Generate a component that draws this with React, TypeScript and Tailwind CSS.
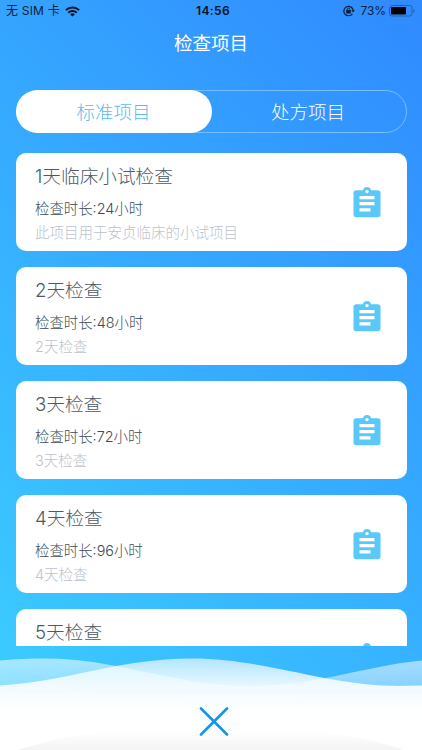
type Item = { title: string; hours?: number; note?: string };

const items: Item[] = [
  { title: "1天临床小试检查", hours: 24, note: "此项目用于安贞临床的小试项目" },
  { title: "2天检查", hours: 48, note: "2天检查" },
  { title: "3天检查", hours: 72, note: "3天检查" },
  { title: "4天检查", hours: 96, note: "4天检查" },
  { title: "5天检查" },
];

function StatusBar() {
  return (
    <div className="grid h-[22px] grid-cols-3 items-center pr-[6px] pl-[6px] text-[12px] leading-[22px] text-[#0b1f38]">
      <div className="flex items-center gap-[5px]">
        <span className="text-[12px] tracking-[0.2px] whitespace-nowrap">无 SIM 卡</span>
        <svg width="15" height="11" viewBox="0 0 15 11" fill="none" stroke="#061323" strokeWidth="2">
          <path d="M.9 4.1a9.4 9.4 0 0 1 13.2 0" />
          <path d="M3.3 6.7a6 6 0 0 1 8.4 0" />
          <path d="M7.5 10.6 5.2 8.4a3.3 3.3 0 0 1 4.6 0z" fill="#061323" stroke="none" />
        </svg>
      </div>
      <div className="pl-[4px] text-center text-[12px] font-semibold tracking-[0.4px] text-[#061323]">14:56</div>
      <div className="flex items-center justify-end">
        <svg className="mr-[6px]" width="12" height="12" viewBox="0 0 12 12" fill="none" stroke="#0b1f38" strokeWidth="1.2">
          <path d="M9.4 8.8A4.7 4.7 0 1 1 10.2 5.2" />
          <path d="M8.2 5.2h3.8l-1.9 2.4z" fill="#0b1f38" stroke="none" />
          <path d="M4.2 5.3V4.4a1.3 1.3 0 0 1 2.6 0v.9" strokeWidth=".9" />
          <rect x="3.2" y="4.9" width="4.6" height="3.5" rx=".4" fill="#0b1f38" stroke="none" />
        </svg>
        <span className="mr-[3px] tracking-[-0.1px]">73%</span>
        <svg width="27" height="12" viewBox="0 0 27 12">
          <rect x=".5" y=".5" width="22.5" height="10.5" rx="2.4" fill="none" stroke="#2360a8" />
          <rect x="2" y="2" width="15" height="7.5" rx=".8" fill="#000" />
          <path d="M24.3 4v4c1.7-.6 1.7-3.4 0-4z" fill="#2360a8" />
        </svg>
      </div>
    </div>
  );
}

function ClipboardIcon() {
  return (
    <svg width="28" height="32" viewBox="0 0 28 32" className="shrink-0">
      <path
        d="M3.3 3.3h6.7a4.1 4.1 0 0 1 8 0h6.7a2.8 2.8 0 0 1 2.8 2.8v21.4a2.8 2.8 0 0 1-2.8 2.8H3.3a2.8 2.8 0 0 1-2.8-2.8V6.1a2.8 2.8 0 0 1 2.8-2.8z"
        fill="#5bc8fa"
      />
      <circle cx="14" cy="4.6" r="1.7" fill="#fff" />
      <path d="M6.5 9h15v3.2h-15zM6.5 15h15v3.2h-15zM6.5 21.2h11v3.2h-11z" fill="#fff" />
    </svg>
  );
}

function Card({ title, hours, note }: Item) {
  return (
    <div className="flex h-[98px] shrink-0 justify-between rounded-[10px] bg-white pr-[25.5px] pl-[19.5px]">
      <div className="font-light whitespace-nowrap">
        <h2 className="mt-[10px] text-[18.67px] leading-[28px] text-[#4b5a66]">{title}</h2>
        {hours && <p className="mt-[7px] text-[14.4px] leading-[22px] text-[#3d4b57]">检查时长:{hours}小时</p>}
        {note && <p className="mt-[2px] text-[14.5px] leading-[22px] text-[#bcc3ca]">{note}</p>}
      </div>
      <div className="pt-[34px]">
        <ClipboardIcon />
      </div>
    </div>
  );
}

function Footer() {
  return (
    <div className="relative h-[105px] shrink-0">
      <svg className="absolute inset-0" width="422" height="105" viewBox="0 0 422 105">
        <defs>
          <linearGradient id="back" x1="0" y1="13" x2="0" y2="85" gradientUnits="userSpaceOnUse">
            <stop offset="0" stopColor="#fff" stopOpacity=".56" />
            <stop offset=".35" stopColor="#fff" stopOpacity=".42" />
            <stop offset="1" stopColor="#fff" stopOpacity="1" />
          </linearGradient>
          <linearGradient id="front" x1="0" y1="13" x2="0" y2="75" gradientUnits="userSpaceOnUse">
            <stop offset="0" stopColor="#fff" stopOpacity=".62" />
            <stop offset=".4" stopColor="#fff" stopOpacity=".86" />
            <stop offset="1" stopColor="#fff" stopOpacity="1" />
          </linearGradient>
          <linearGradient id="shade" x1="0" y1="86" x2="0" y2="105" gradientUnits="userSpaceOnUse">
            <stop offset="0" stopColor="#f3f3f3" stopOpacity="0" />
            <stop offset="1" stopColor="#f3f3f3" />
          </linearGradient>
        </defs>
        <path d="M0 14.5C17 13 31 12.5 45 12.5C120 12.5 172 40 250 40C316 40 364 20 422 14.5V105H0z" fill="url(#back)" />
        <path d="M0 39.5C66 36 118 12.5 192 12.5C265 12.5 326 40 400 40L422 39.5V105H0z" fill="url(#front)" />
        <path d="M14 105C50 94 80 86 120 86H302C342 86 372 94 408 105z" fill="url(#shade)" />
      </svg>
      <div className="relative flex justify-center pt-[61px] pl-[5px]">
        <svg width="30" height="30" viewBox="0 0 30 30" stroke="#1296eb" strokeWidth="2.6" strokeLinecap="round">
          <path d="M2 1.5l26 26M28 1.5L2 27.5" />
        </svg>
      </div>
    </div>
  );
}

export default function App() {
  return (
    <div className="flex h-[750px] w-[422px] flex-col overflow-hidden bg-[linear-gradient(45deg,#3cd0ff_0%,#36adff_50%,#308aff_100%)] font-['Inter','Noto_Sans_CJK_SC',sans-serif]">
      <StatusBar />
      <h1 className="h-[42px] text-center text-[18.5px] leading-[43px] font-normal text-white">检查项目</h1>
      <div className="mx-[15.5px] mt-[26px] flex h-[43px] shrink-0 rounded-full border border-[#75bdff] text-[18.5px] leading-[42px] font-light">
        <button className="-m-px w-[196px] rounded-full bg-white text-[#5bbcf0]">标准项目</button>
        <button className="flex-1 text-white">处方项目</button>
      </div>
      <div className="mx-[15.5px] mt-[20px] flex h-[493px] shrink-0 flex-col gap-[16px] overflow-hidden">
        {items.map((item) => (
          <Card key={item.title} {...item} />
        ))}
      </div>
      <Footer />
    </div>
  );
}
